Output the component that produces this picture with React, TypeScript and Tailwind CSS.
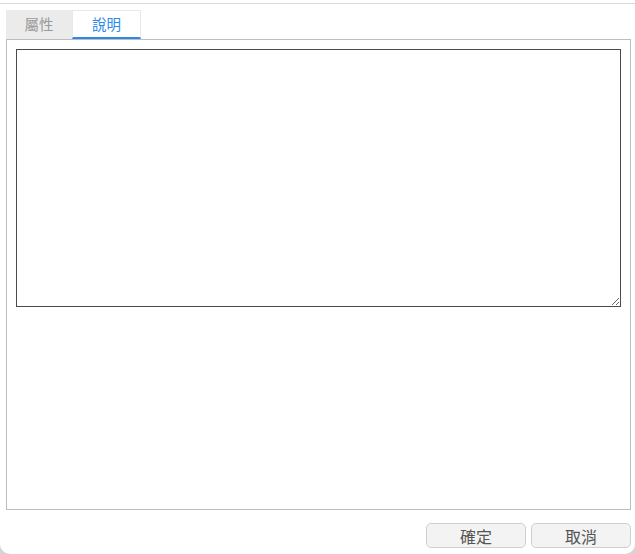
const App = () => {
  const font = { fontFamily: '"Noto Sans CJK TC", "Noto Sans", sans-serif' }

  return (
    <div className="w-[635px] h-[554px] bg-[#d4d4d4]" style={font}>
      <div className="h-full bg-white rounded-b-[10px] flex flex-col">
        {/* top rule */}
        <div className="mt-[3px] border-t border-[#dadada]" />

        {/* tabs */}
        <div className="flex pl-[6px] mt-[6px] h-[29px]">
          <div className="w-[66px] bg-[#ebebeb] text-[#9a9a9a] text-[14.5px] flex items-center justify-center pb-[2px]">
            屬性
          </div>
          <div className="w-[69px] border-t border-x border-[#e8e8e8] border-b-2 border-b-[#2b8ae8] text-[#2b8ae8] text-[14.5px] flex items-center justify-center">
            說明
          </div>
        </div>

        {/* panel */}
        <div className="mx-[6px] mr-[4px] h-[471px] border border-[#bdbdbd] pt-[9px] px-[9px]">
          <textarea className="block w-full h-[258px] border border-[#4a4a4a] resize-y outline-none p-1 text-sm" />
        </div>

        {/* buttons */}
        <div className="flex justify-end gap-[5px] pr-[4px] mt-[13px]">
          <button className="w-[100px] h-[25px] rounded-[5px] border border-[#cfcfcf] bg-[#f3f3f3] text-[#555] text-[16px] leading-none">
            確定
          </button>
          <button className="w-[100px] h-[25px] rounded-[5px] border border-[#cfcfcf] bg-[#f3f3f3] text-[#555] text-[16px] leading-none">
            取消
          </button>
        </div>
      </div>
    </div>
  )
}

export default App
